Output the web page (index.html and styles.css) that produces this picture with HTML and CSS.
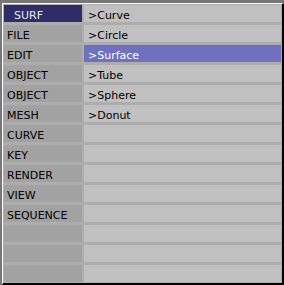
FILE: index.html
```html
<!DOCTYPE html>
<html>
<head>
  <meta charset="UTF-8">
  <title>Menu</title>
  <link rel="stylesheet" href="styles.css">
</head>
<body>
<div class="menu">
    <div class="cell head active">SURF</div><div class="cell item">&gt;Curve</div>
    <div class="cell head">FILE</div><div class="cell item">&gt;Circle</div>
    <div class="cell head">EDIT</div><div class="cell item hl">&gt;Surface</div>
    <div class="cell head">OBJECT</div><div class="cell item">&gt;Tube</div>
    <div class="cell head">OBJECT</div><div class="cell item">&gt;Sphere</div>
    <div class="cell head">MESH</div><div class="cell item">&gt;Donut</div>
    <div class="cell head">CURVE</div><div class="cell item"></div>
    <div class="cell head">KEY</div><div class="cell item"></div>
    <div class="cell head">RENDER</div><div class="cell item"></div>
    <div class="cell head">VIEW</div><div class="cell item"></div>
    <div class="cell head">SEQUENCE</div><div class="cell item"></div>
    <div class="cell head"></div><div class="cell item"></div>
    <div class="cell head"></div><div class="cell item"></div>
    <div class="cell head"></div><div class="cell item"></div>
</div>
</body>
</html>
```

FILE: styles.css
```css
* {
    margin: 0;
    padding: 0;
    box-sizing: border-box;
}
body {
    background-color: #777777;
    font-family: 'DejaVu Sans', sans-serif;
    font-size: 11px;
}
.menu {
    width: 282px;
    height: 282px;
    margin: 3px 0 0 2px;
    padding: 1px;
    background-color: #adadad;
    border-top: 1px solid #ffffff;
    border-left: 1px solid #ffffff;
    border-right: 2px solid #000000;
    border-bottom: 2px solid #000000;
    display: grid;
    grid-template-columns: 78px 197px;
    grid-auto-rows: 17px;
    column-gap: 2px;
    row-gap: 3px;
}
.cell {
    height: 17px;
    padding-top: 4px;
    line-height: 13px;
    color: #000000;
    white-space: nowrap;
}
.head {
    background-color: #a2a2a2;
    padding-left: 3px;
}
.head.active {
    background-color: #2e2d68;
    color: #e8e8f0;
    padding-left: 10px;
}
.item {
    background-color: #c0c0c0;
    padding-left: 4px;
}
.item.hl {
    background-color: #7070c0;
    color: #ffffff;
}
```
